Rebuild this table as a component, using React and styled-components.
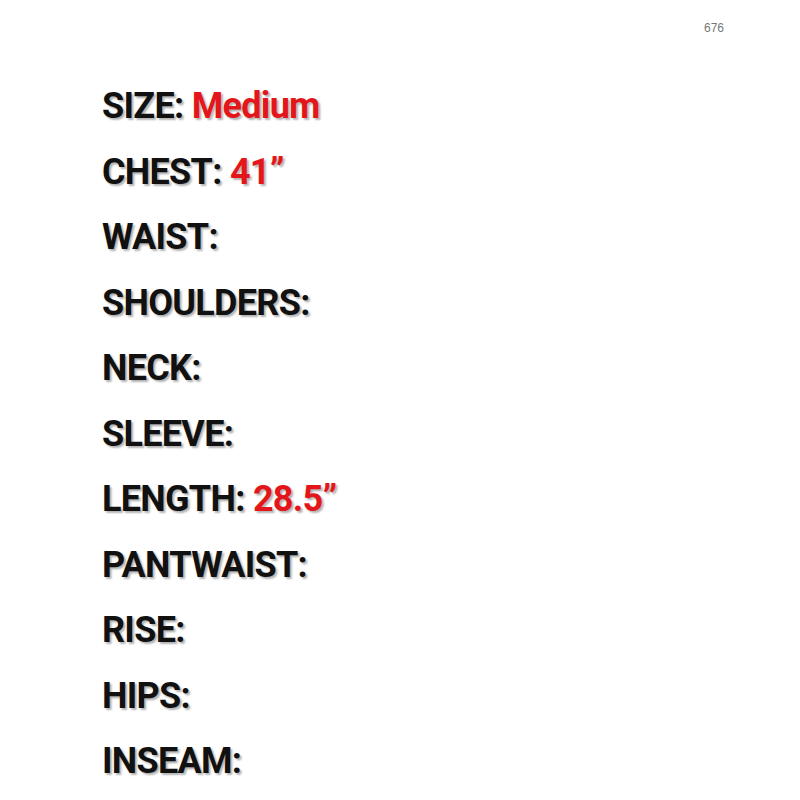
import React from 'react';
import styled, { createGlobalStyle } from 'styled-components';

const GlobalStyle = createGlobalStyle`
  body {
    margin: 0;
    background: #ffffff;
  }
`;

const Page = styled.div`
  width: 800px;
  height: 800px;
  display: flex;
  flex-direction: column;
  overflow: hidden;
`;

const PageNumber = styled.div`
  align-self: flex-end;
  margin-right: 76px;
  padding-top: 21px;
  height: 74px;
  box-sizing: border-box;
  font-family: 'Liberation Sans', Arial, sans-serif;
  font-size: 12px;
  color: #777;
`;

const List = styled.div`
  display: flex;
  flex-direction: column;
  padding-left: 102px;
`;

const Row = styled.div`
  height: 65.5px;
  line-height: 65.5px;
  font-family: Roboto, 'Liberation Sans', sans-serif;
  font-weight: 700;
  font-size: 36px;
  letter-spacing: -0.7px;
  color: #111;
  text-shadow: 2px 2px 2px rgba(0, 0, 0, 0.3);
  white-space: nowrap;
`;

const Value = styled.span`
  color: #e3171b;
`;

const rows = [
  ['SIZE:', 'Medium'],
  ['CHEST:', '41\u201D'],
  ['WAIST:'],
  ['SHOULDERS:'],
  ['NECK:'],
  ['SLEEVE:'],
  ['LENGTH:', '28.5\u201D'],
  ['PANTWAIST:'],
  ['RISE:'],
  ['HIPS:'],
  ['INSEAM:'],
];

export default function App() {
  return (
    <Page>
      <GlobalStyle />
      <PageNumber>676</PageNumber>
      <List>
        {rows.map(([label, value]) => (
          <Row key={label}>
            {label}
            {value && <Value> {value}</Value>}
          </Row>
        ))}
      </List>
    </Page>
  );
}
